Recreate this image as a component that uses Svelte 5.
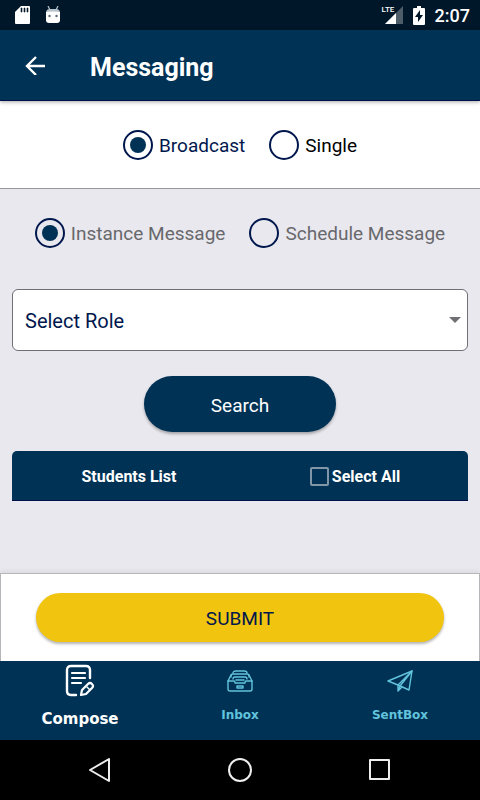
<script lang="ts">
  let audience = $state("broadcast");
  let timing = $state("instance");
  let role = $state("");
  let selectAll = $state(false);

  const audiences = [
    { value: "broadcast", label: "Broadcast" },
    { value: "single", label: "Single" },
  ];

  const timings = [
    { value: "instance", label: "Instance Message" },
    { value: "schedule", label: "Schedule Message" },
  ];
</script>

<div class="screen">
  <div class="status-bar">
    <div class="status-group">
      <svg width="16" height="18" viewBox="0 0 16 18" aria-hidden="true">
        <path d="M6 0h8q1 0 1 1v16q0 1-1 1H1q-1 0-1-1V6z" fill="#fff" />
        <path d="M6 2h1v4H6zM9 2h1v4H9zM12 2h1v4h-1z" fill="#001729" stroke="#001729" stroke-width=".6" />
      </svg>
      <svg width="16" height="18" viewBox="0 0 16 18" aria-hidden="true">
        <path d="M3 0l2 4M13 0l-2 4" stroke="#b8c4cb" stroke-width="1.2" />
        <path d="M1 7q0-4 4-4h6q4 0 4 4z" fill="#b8c4cb" />
        <path d="M1 6q7-1 14 0v8q0 3-3 3H4q-3 0-3-3z" fill="#fff" />
        <circle cx="4.5" cy="10" r="1.2" fill="#596873" />
        <circle cx="11.5" cy="10" r="1.2" fill="#596873" />
      </svg>
    </div>
    <div class="status-group status-right">
      <div class="signal">
        <span class="network">LTE</span>
        <svg width="18" height="18" viewBox="0 0 18 18" aria-hidden="true">
          <path d="M18 0v18H0z" fill="#4d5d69" />
          <path d="M11 7v11H0z" fill="#fff" />
        </svg>
      </div>
      <svg width="12" height="19" viewBox="0 0 12 19" aria-hidden="true">
        <path d="M4 0h4v2h3q1 0 1 1v15q0 1-1 1H1q-1 0-1-1V3q0-1 1-1h3z" fill="#fff" />
        <path d="M7 4L2 11h3v5l5-7H7z" fill="#001729" />
      </svg>
      <span class="clock">2:07</span>
    </div>
  </div>

  <header class="app-bar">
    <button class="back" aria-label="Back">
      <svg width="20" height="20" viewBox="0 0 20 20" fill="none" stroke="#fff" stroke-width="2.4">
        <path d="M20 11H2M11 2l-9 9 9 9" />
      </svg>
    </button>
    <h1>Messaging</h1>
  </header>

  <div class="radio-row audience">
    {#each audiences as option}
      <label class="radio">
        <input type="radio" name="audience" value={option.value} bind:group={audience} />
        <span>{option.label}</span>
      </label>
    {/each}
  </div>

  <main>
    <div class="radio-row timing">
      {#each timings as option}
        <label class="radio">
          <input type="radio" name="timing" value={option.value} bind:group={timing} />
          <span>{option.label}</span>
        </label>
      {/each}
    </div>

    <div class="select-box">
      <select aria-label="Role" bind:value={role}>
        <option value="">Select Role</option>
      </select>
      <svg class="caret" width="12" height="6" viewBox="0 0 12 6" aria-hidden="true">
        <path d="M0 0h12L6 6z" fill="#707074" />
      </svg>
    </div>

    <button class="search">Search</button>

    <div class="list-header">
      <span>Students List</span>
      <label class="select-all">
        <input type="checkbox" bind:checked={selectAll} />
        Select All
      </label>
    </div>
  </main>

  <div class="submit-bar">
    <button class="submit">SUBMIT</button>
  </div>

  <nav class="tabs">
    <a class="tab active" href="#compose">
      <svg width="30" height="34" viewBox="0 0 30 34" fill="none" stroke="#fff" stroke-width="2.4" stroke-linecap="round" stroke-linejoin="round">
        <path d="M25 14V6q0-4-4-4H6Q2 2 2 6v21q0 4 4 4h5" />
        <path d="M7 9h13M7 14h13M7 19h9" stroke-width="2.2" />
        <path d="M16 31l1-5 6-6q2-2 4 0t0 4l-6 6z" stroke-width="2.2" />
        <path d="M22 23l3 3" stroke-width="1.4" />
      </svg>
      <span>Compose</span>
    </a>
    <a class="tab" href="#inbox">
      <svg width="26" height="22" viewBox="0 0 26 22" fill="none" stroke="#62c4dc" stroke-width="1.4" stroke-linecap="round" stroke-linejoin="round">
        <path d="M1 11h6q1 0 1 1v1h10v-1q0-1 1-1h6v8q0 2-2 2H3q-2 0-2-2z" />
        <path d="M1 11L4 5M25 11l-3-6M6 3q0-2 3-2h8q3 0 3 2" />
        <path d="M4 7V6q0-2 2-2h14q2 0 2 2v1M6 9q0-2 2-2h10q2 0 2 2M9 10h8" />
        <rect x="10" y="16" width="6" height="2" />
      </svg>
      <span>Inbox</span>
    </a>
    <a class="tab" href="#sentbox">
      <svg width="26" height="22" viewBox="0 0 26 22" fill="none" stroke="#62c4dc" stroke-width="1.4" stroke-linecap="round" stroke-linejoin="round">
        <path d="M25 1L1 11l10 4 11 5z" />
        <path d="M25 1L11 15v6l4-4M25 1L13 16l-2 5" />
      </svg>
      <span>SentBox</span>
    </a>
  </nav>

  <div class="system-bar">
    <button aria-label="Back">
      <svg width="24" height="24" viewBox="0 0 24 24"><path d="M21 1v22L2 12z" /></svg>
    </button>
    <button aria-label="Home">
      <svg width="24" height="24" viewBox="0 0 24 24"><circle cx="12" cy="12" r="11" /></svg>
    </button>
    <button aria-label="Recent apps">
      <svg width="24" height="24" viewBox="0 0 24 24"><rect x="2" y="2" width="19" height="19" /></svg>
    </button>
  </div>
</div>

<style>
  :global(body) {
    margin: 0;
  }

  .screen {
    --navy: #003256;
    --ink: #00174d;
    --surface: #e9e8ee;
    display: flex;
    flex-direction: column;
    min-height: 100vh;
    background: var(--surface);
    color: var(--ink);
    font-family: Roboto, sans-serif;
    font-size: 19px;
  }

  button,
  select {
    font: inherit;
    color: inherit;
    border: 0;
    padding: 0;
    cursor: pointer;
  }

  svg {
    display: block;
  }

  .status-bar {
    display: flex;
    align-items: center;
    justify-content: space-between;
    height: 30px;
    padding: 0 10px 0 15px;
    background: #001729;
    color: #fff;
  }

  .status-group {
    display: flex;
    align-items: center;
    gap: 14px;
  }

  .status-right {
    gap: 10px;
  }

  .signal {
    position: relative;
    padding-left: 3px;
  }

  .network {
    position: absolute;
    top: -1px;
    left: 0;
    font-size: 8px;
    font-weight: 500;
    line-height: 10px;
  }

  .clock {
    font-size: 18px;
    font-weight: 500;
    line-height: 24px;
    padding-top: 2px;
  }

  .app-bar {
    display: flex;
    align-items: center;
    gap: 45px;
    height: 70px;
    padding: 0 25px;
    background: var(--navy);
    border-bottom: 1px solid #00104a;
    color: #fff;
    box-shadow: 0 1px 4px rgba(0, 0, 0, 0.35);
    z-index: 1;
  }

  .back {
    background: none;
  }

  h1 {
    margin: 0;
    padding-top: 4px;
    font-size: 25px;
    font-weight: 700;
  }

  .radio-row {
    display: flex;
    flex-wrap: wrap;
    justify-content: center;
    gap: 24px;
  }

  .audience {
    padding: 29px 12px 28px;
    background: #fff;
    border-bottom: 1px solid #96969c;
  }

  .audience .radio:last-child {
    color: #000;
  }

  .timing {
    color: #68686c;
  }

  .radio {
    display: flex;
    align-items: center;
    gap: 6px;
    cursor: pointer;
  }

  .radio input {
    display: grid;
    place-items: center;
    appearance: none;
    box-sizing: border-box;
    width: 30px;
    height: 30px;
    margin: 0;
    border: 2px solid var(--ink);
    border-radius: 50%;
  }

  .radio input:checked::before {
    content: "";
    width: 16px;
    height: 16px;
    border-radius: 50%;
    background: var(--navy);
  }

  main {
    display: flex;
    flex: 1;
    flex-direction: column;
    padding: 29px 12px 24px;
  }

  .select-box {
    position: relative;
    margin: 41px 0 25px;
  }

  select {
    display: block;
    appearance: none;
    box-sizing: border-box;
    width: 100%;
    height: 62px;
    padding: 2px 30px 0 12px;
    background: #fff;
    border: 1px solid #707074;
    border-radius: 6px;
    font-size: 20px;
  }

  .caret {
    position: absolute;
    top: 28px;
    right: 7px;
    pointer-events: none;
  }

  .search {
    align-self: center;
    width: 192px;
    height: 56px;
    padding-top: 2px;
    border-radius: 28px;
    background: var(--navy);
    color: #fff;
    box-shadow: 0 2px 3px rgba(0, 0, 0, 0.3);
  }

  .list-header {
    display: grid;
    grid-template-columns: 1fr 1fr;
    align-items: center;
    justify-items: center;
    box-sizing: border-box;
    height: 50px;
    margin-top: 19px;
    padding: 2px 0 0 4px;
    background: var(--navy);
    border-bottom: 1px solid #00104a;
    border-radius: 5px 5px 0 0;
    color: #fff;
    font-size: 16px;
    font-weight: 700;
  }

  .select-all {
    display: flex;
    align-items: center;
    gap: 3px;
    cursor: pointer;
  }

  .select-all input {
    appearance: none;
    box-sizing: border-box;
    width: 19px;
    height: 19px;
    margin: 0;
    border: 2px solid #8197a8;
    border-radius: 2px;
  }

  .select-all input:checked {
    background: #fff;
  }

  .submit-bar {
    padding: 19px 35px;
    background: #fff;
    border: 1px solid #b5b5ba;
    border-bottom: 0;
    box-shadow: 0 -1px 6px rgba(0, 0, 0, 0.08);
  }

  .submit {
    display: block;
    width: 100%;
    height: 49px;
    padding-top: 2px;
    border-radius: 25px;
    background: #f1c40f;
    box-shadow: 0 2px 3px rgba(0, 0, 0, 0.3);
  }

  .tabs {
    display: grid;
    grid-template-columns: repeat(3, 1fr);
    height: 79px;
    background: var(--navy);
    font-family: "DejaVu Sans", sans-serif;
  }

  .tab {
    display: flex;
    flex-direction: column;
    align-items: center;
    gap: 10px;
    padding-top: 9px;
    color: #62c4dc;
    font-size: 12px;
    font-weight: 700;
    line-height: 26px;
    text-decoration: none;
  }

  .tab.active {
    gap: 8px;
    padding-top: 3px;
    color: #fff;
    font-size: 15px;
  }

  .system-bar {
    display: flex;
    align-items: center;
    justify-content: center;
    gap: 116px;
    height: 60px;
    background: #000;
  }

  .system-bar button {
    background: none;
  }

  .system-bar svg {
    fill: none;
    stroke: #eee;
    stroke-width: 2;
    stroke-linejoin: round;
  }
</style>
